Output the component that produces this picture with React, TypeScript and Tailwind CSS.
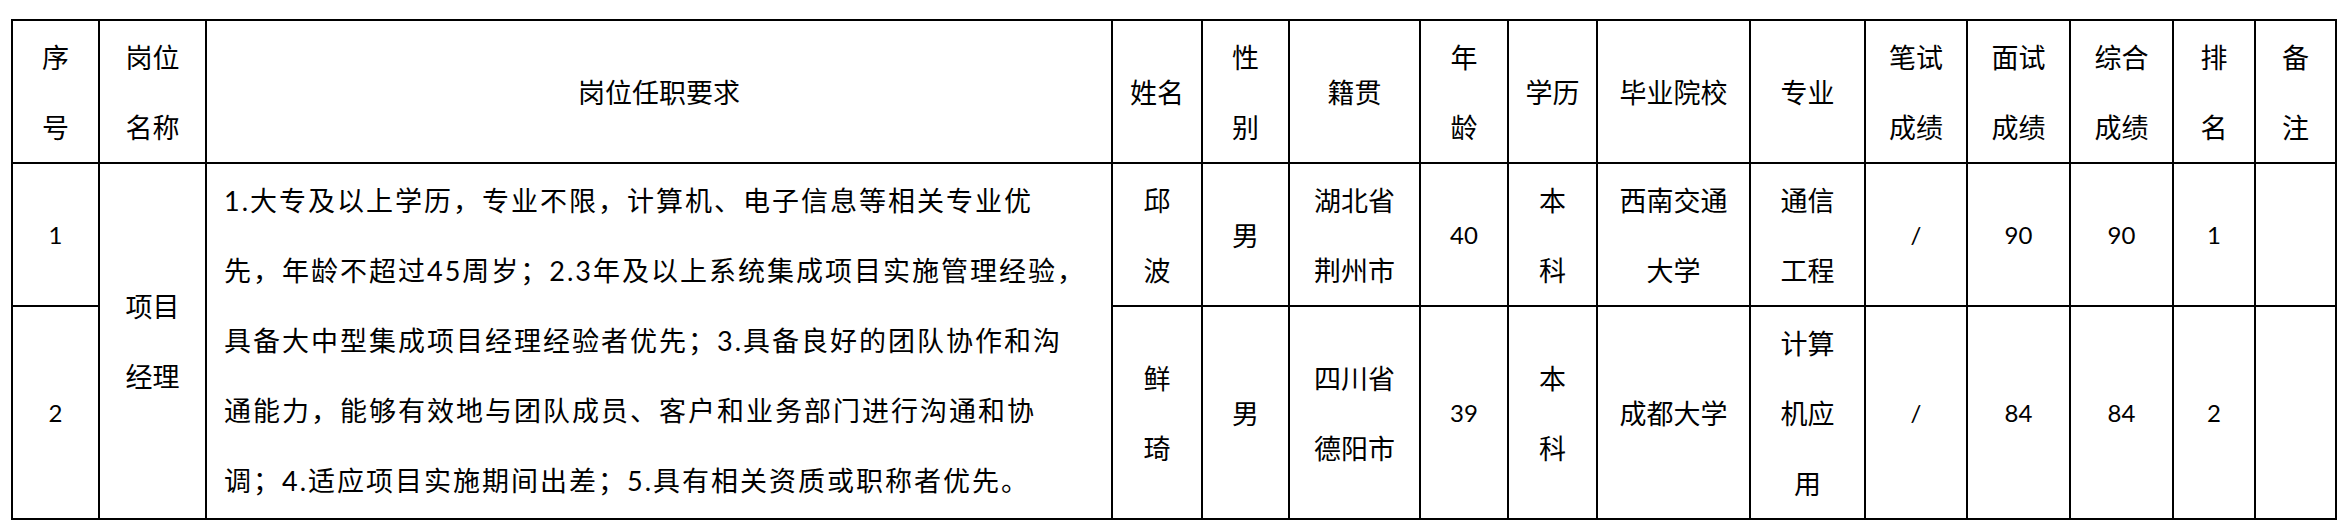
import React from "react";

type Row = {
    no: string;
    name: string[];
    sex: string;
    origin: string[];
    age: string;
    edu: string[];
    school: string[];
    major: string[];
    written: string;
    interview: string;
    total: string;
    rank: string;
};

const rows: Row[] = [
    {
        no: "1",
        name: ["邱", "波"],
        sex: "男",
        origin: ["湖北省", "荆州市"],
        age: "40",
        edu: ["本", "科"],
        school: ["西南交通", "大学"],
        major: ["通信", "工程"],
        written: "/",
        interview: "90",
        total: "90",
        rank: "1",
    },
    {
        no: "2",
        name: ["鲜", "琦"],
        sex: "男",
        origin: ["四川省", "德阳市"],
        age: "39",
        edu: ["本", "科"],
        school: ["成都大学"],
        major: ["计算", "机应", "用"],
        written: "/",
        interview: "84",
        total: "84",
        rank: "2",
    },
];

const requirement = [
    "1.大专及以上学历，专业不限，计算机、电子信息等相关专业优",
    "先，年龄不超过45周岁；2.3年及以上系统集成项目实施管理经验，",
    "具备大中型集成项目经理经验者优先；3.具备良好的团队协作和沟",
    "通能力，能够有效地与团队成员、客户和业务部门进行沟通和协",
    "调；4.适应项目实施期间出差；5.具有相关资质或职称者优先。",
];

const headers: string[][] = [
    ["序", "号"],
    ["岗位", "名称"],
    ["岗位任职要求"],
    ["姓名"],
    ["性", "别"],
    ["籍贯"],
    ["年", "龄"],
    ["学历"],
    ["毕业院校"],
    ["专业"],
    ["笔试", "成绩"],
    ["面试", "成绩"],
    ["综合", "成绩"],
    ["排", "名"],
    ["备", "注"],
];

const Cell = ({ lines, num, className = "" }: { lines: string[]; num?: boolean; className?: string }) => (
    <div
        className={`border-r-2 border-b-2 border-black flex flex-col items-center justify-center text-center leading-[70px] ${
            num ? "font-['Lato',sans-serif] text-[24px]" : "font-['Noto_Sans_CJK_SC',sans-serif] text-[27px]"
        } ${className}`}
    >
        {lines.map((l, i) => (
            <div key={i} className="whitespace-nowrap">
                {l}
            </div>
        ))}
    </div>
);

const App = () => {
    return (
        <div className="w-[2345px] h-[528px] bg-white text-black pt-[19px] pl-[11px]">
            <div className="grid grid-cols-[87px_107px_906px_90px_87px_131px_88px_89px_153px_115px_102px_103px_103px_82px_81px] grid-rows-[143px_143px_213px] border-l-2 border-t-2 border-black w-max">
                {headers.map((h, i) => (
                    <Cell key={i} lines={h} />
                ))}

                {/* row 1 */}
                <Cell lines={[rows[0].no]} num />
                <Cell lines={["项目", "经理"]} className="row-span-2" />
                <div className="row-span-2 border-r-2 border-b-2 border-black flex flex-col justify-center pl-[17px] font-['Lato','Noto_Sans_CJK_SC',sans-serif] text-[27px] leading-[70px] tracking-[2px]">
                    {requirement.map((l, i) => (
                        <div key={i} className="whitespace-nowrap">
                            {l}
                        </div>
                    ))}
                </div>
                <Cell lines={rows[0].name} />
                <Cell lines={[rows[0].sex]} />
                <Cell lines={rows[0].origin} />
                <Cell lines={[rows[0].age]} num />
                <Cell lines={rows[0].edu} />
                <Cell lines={rows[0].school} />
                <Cell lines={rows[0].major} />
                <Cell lines={[rows[0].written]} num />
                <Cell lines={[rows[0].interview]} num />
                <Cell lines={[rows[0].total]} num />
                <Cell lines={[rows[0].rank]} num />
                <Cell lines={[]} />

                {/* row 2 */}
                <Cell lines={[rows[1].no]} num />
                <Cell lines={rows[1].name} />
                <Cell lines={[rows[1].sex]} />
                <Cell lines={rows[1].origin} />
                <Cell lines={[rows[1].age]} num />
                <Cell lines={rows[1].edu} />
                <Cell lines={rows[1].school} />
                <Cell lines={rows[1].major} />
                <Cell lines={[rows[1].written]} num />
                <Cell lines={[rows[1].interview]} num />
                <Cell lines={[rows[1].total]} num />
                <Cell lines={[rows[1].rank]} num />
                <Cell lines={[]} />
            </div>
        </div>
    );
};

export default App;
